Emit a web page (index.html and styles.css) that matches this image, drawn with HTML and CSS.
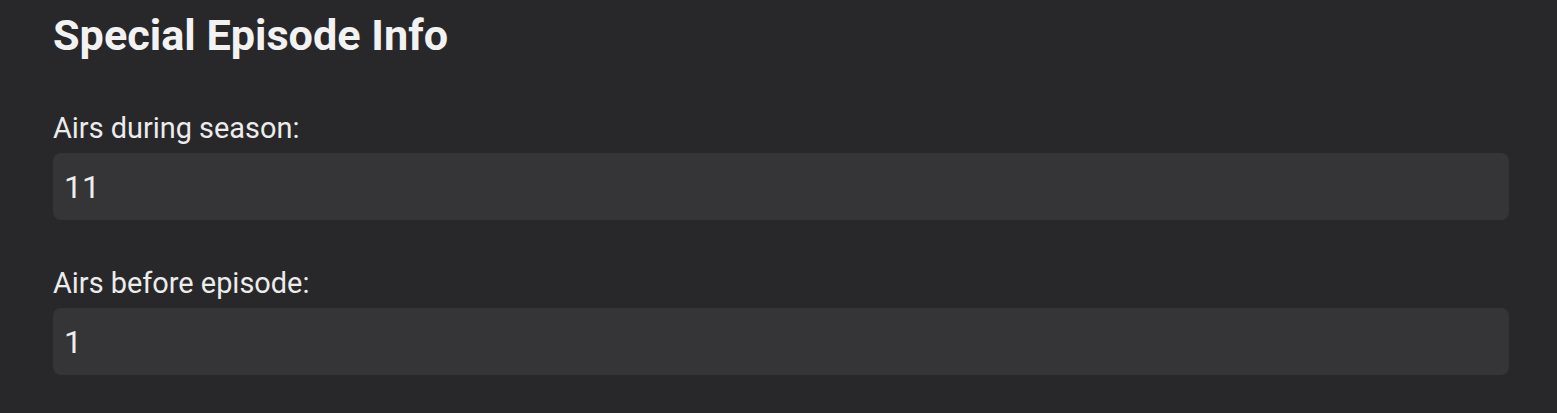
FILE: index.html
```html
<!DOCTYPE html>
<html lang="en">
<head>
<meta charset="utf-8">
<title>Special Episode Info</title>
<link rel="stylesheet" href="styles.css">
</head>
<body>
<main class="page">
  <h2 class="section-title">Special Episode Info</h2>
  <div class="field">
    <label class="field-label" for="season">Airs during season:</label>
    <input class="field-input" id="season" type="text" value="11">
  </div>
  <div class="field">
    <label class="field-label" for="episode">Airs before episode:</label>
    <input class="field-input" id="episode" type="text" value="1">
  </div>
</main>
</body>
</html>
```

FILE: styles.css
```css
html, body {
  margin: 0;
  padding: 0;
  background: #28282a;
}
body {
  font-family: Roboto, "Noto Sans", "Liberation Sans", sans-serif;
  color: #f2f2f2;
  height: 413px;
  overflow: hidden;
}
.page {
  display: flex;
  flex-direction: column;
  padding: 11px 48px 0 53px;
}
.section-title {
  margin: 0 0 50px;
  font-size: 43.2px;
  line-height: 50px;
  font-weight: 700;
  color: #f2f2f2;
}
.field {
  display: flex;
  flex-direction: column;
  margin-bottom: 46px;
}
.field-label {
  font-size: 28.9px;
  line-height: 34px;
  margin-bottom: 8px;
  color: #ececec;
}
.field-input {
  box-sizing: border-box;
  height: 67px;
  width: 100%;
  border: none;
  outline: none;
  border-radius: 8px;
  background: #353537;
  color: #eeeeee;
  font-family: Roboto, "Noto Sans", "Liberation Sans", sans-serif;
  font-size: 32px;
  padding: 0 11px;
  margin: 0;
}
```
